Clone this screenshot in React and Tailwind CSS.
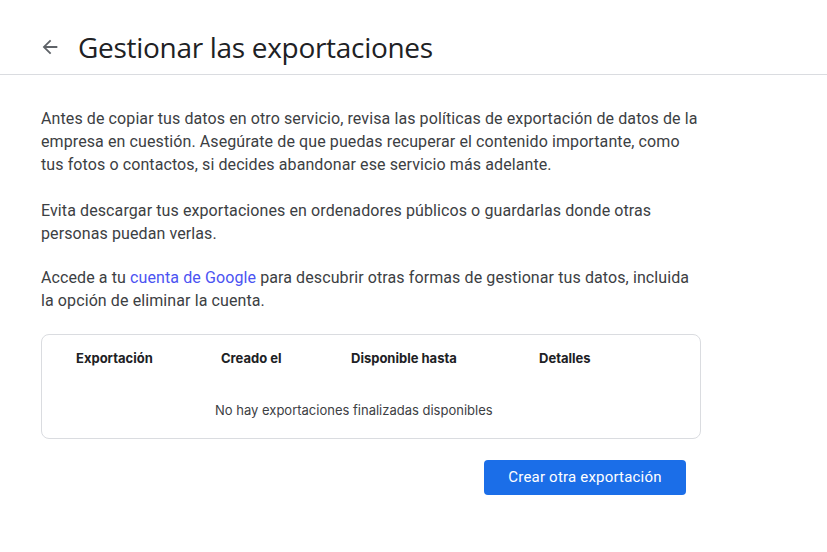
import React from 'react';

const headers = [
  { label: 'Exportación', w: 'w-[145px]' },
  { label: 'Creado el', w: 'w-[130px]' },
  { label: 'Disponible hasta', w: 'w-[188px]' },
  { label: 'Detalles', w: 'flex-1' },
];

export default function App() {
  return (
    <div className="min-h-screen bg-white text-[#3c4043]" style={{ fontFamily: 'Roboto, "Noto Sans", sans-serif' }}>
      {/* Cabecera */}
      <header className="flex items-center h-[75px] pt-[20px] pl-[39px] border-b border-[#dadce0]">
        <button className="w-[22px] h-[22px] flex items-center justify-center text-[#5f6368]">
          <svg width="22" height="22" viewBox="0 0 24 24" fill="currentColor">
            <path d="M20 11H7.83l5.59-5.59L12 4l-8 8 8 8 1.41-1.41L7.83 13H20v-2z" />
          </svg>
        </button>
        <h1 className="ml-[17px] text-[28px] text-[#202124]" style={{ fontFamily: '"Open Sans", Roboto, sans-serif', letterSpacing: '-0.3px' }}>
          Gestionar las exportaciones
        </h1>
      </header>

      <main className="pl-[41px] pt-[32px] w-[701px]">
        <p className="text-[16px] leading-[23px] tracking-[0.1px]">
          Antes de copiar tus datos en otro servicio, revisa las políticas de exportación de datos de la empresa en cuestión. Asegúrate de que puedas recuperar el contenido importante, como tus fotos o contactos, si decides abandonar ese servicio más adelante.
        </p>
        <p className="text-[16px] leading-[23px] tracking-[0.1px] mt-[23px]">
          Evita descargar tus exportaciones en ordenadores públicos o guardarlas donde otras personas puedan verlas.
        </p>
        <p className="text-[16px] leading-[23px] tracking-[0.1px] mt-[21px]">
          Accede a tu <a href="#" className="text-[#4b53f2]">cuenta de Google</a> para descubrir otras formas de gestionar tus datos, incluida la opción de eliminar la cuenta.
        </p>

        {/* Tabla */}
        <div className="mt-[22px] h-[105px] border border-[#dadce0] rounded-[8px] text-[#202124]" style={{ fontFamily: 'Inter, Roboto, sans-serif' }}>
          <div className="flex pl-[34px] pt-[14px] text-[13px] font-bold">
            {headers.map((h) => (
              <div key={h.label} className={h.w}>{h.label}</div>
            ))}
          </div>
          <div className="mt-[32px] pl-[173px] text-[13px] text-[#3c4043]">
            No hay exportaciones finalizadas disponibles
          </div>
        </div>

        <div className="flex justify-end pr-[15px] mt-[21px]">
          <button className="h-[35px] w-[202px] rounded-[4px] bg-[#1b6ee8] text-white text-[15px] tracking-[0.2px]">
            Crear otra exportación
          </button>
        </div>
      </main>
    </div>
  );
}
